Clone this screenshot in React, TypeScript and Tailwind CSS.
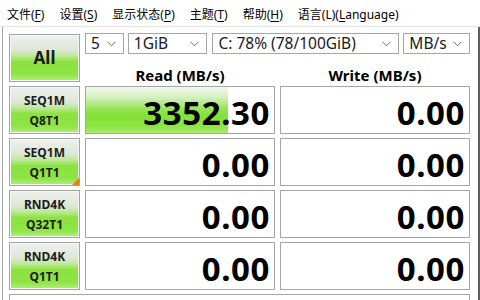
import type { ReactNode } from "react";

const FONT = `"Noto Sans", "Noto Sans CJK SC", sans-serif`;

const menus: { label: string; key: string; rest: string; pre?: string }[] = [
  { pre: "文件(", key: "F", rest: ")", label: "file" },
  { pre: "设置(", key: "S", rest: ")", label: "settings" },
  { pre: "显示状态(", key: "P", rest: ")", label: "view" },
  { pre: "主题(", key: "T", rest: ")", label: "theme" },
  { pre: "帮助(", key: "H", rest: ")", label: "help" },
  { pre: "语言(L)(", key: "L", rest: "anguage)", label: "lang" },
];

const rows = [
  { a: "SEQ1M", b: "Q8T1", read: 3352.3, write: 0, marker: false },
  { a: "SEQ1M", b: "Q1T1", read: 0, write: 0, marker: true },
  { a: "RND4K", b: "Q32T1", read: 0, write: 0, marker: false },
  { a: "RND4K", b: "Q1T1", read: 0, write: 0, marker: false },
];

const BTN =
  "relative border border-[#a3a3a3] shadow-[inset_0_0_0_1px_#f6f8f4] bg-[linear-gradient(to_bottom,#eef1ec_0%,#e1e7db_30%,#bfe99d_45%,#8ce33e_58%,#8de545_85%,#b2ee7c_100%)] flex flex-col items-center justify-center text-[#1c1c1c] font-bold";

function Chevron() {
  return (
    <svg width="9" height="6" viewBox="0 0 9 6" className="shrink-0">
      <path d="M0.5 0.8 L4.5 4.8 L8.5 0.8" fill="none" stroke="#6b6b6b" strokeWidth="1" />
    </svg>
  );
}

function Combo({ w, children }: { w: string; children: ReactNode }) {
  return (
    <div
      className={`${w} h-[21px] border border-[#a6a6a6] bg-white flex items-center justify-between pl-[5px] pr-[7px] text-[15.5px] leading-none text-[#1a1a1a]`}
    >
      <span>{children}</span>
      <Chevron />
    </div>
  );
}

function ValueCell({ value, max }: { value: number; max: number }) {
  const pct = Math.min(100, (value / max) * 100);
  return (
    <div className="relative h-[48px] border border-[#a6a6a6] bg-white overflow-hidden">
      {value > 0 && (
        <div
          className="absolute left-0 top-0 bottom-0 bg-[linear-gradient(to_bottom,#f2f8ee_0%,#d6f0c2_22%,#9ce65f_45%,#84e137_60%,#8be443_85%,#a9ec73_100%)]"
          style={{ width: `${pct}%` }}
        />
      )}
      <div className="relative h-full flex items-center justify-end pr-[4px] pt-[4px] text-[33px] tracking-[0.6px] font-bold leading-none text-black">
        {value.toFixed(2)}
      </div>
    </div>
  );
}

export default function App() {
  return (
    <div
      className="w-[480px] h-[300px] bg-white overflow-hidden flex flex-col"
      style={{ fontFamily: FONT }}
    >
      <div className="h-[27px] shrink-0 flex items-center pl-[7px] pt-[3px] gap-[15px] text-[12px] text-black border-b border-[#e3e3e3]">
        {menus.map((m) => (
          <span key={m.label} className="whitespace-nowrap">
            {m.pre}
            <span className="underline underline-offset-2">{m.key}</span>
            {m.rest}
          </span>
        ))}
      </div>

      <div className="flex-1 ml-[2px] border-l border-[#a8a8a8] border-r-2 border-r-[#5c5f5a] pl-[6px] pt-[7px] pr-[6px]">
        <div className="grid grid-cols-[71px_190px_190px] gap-x-[5px] gap-y-[4px]">
          <div className={`${BTN} h-[48px] text-[17px]`}>All</div>
          <div className="col-span-2 h-[48px] flex flex-col">
            <div className="flex gap-[4px] -mt-[1px]">
              <Combo w="w-[39px]">5</Combo>
              <Combo w="w-[80px]">1GiB</Combo>
              <Combo w="w-[188px] ml-[1px]">C: 78% (78/100GiB)</Combo>
              <Combo w="w-[67px]">MB/s</Combo>
            </div>
            <div className="flex-1 grid grid-cols-2 gap-x-[5px] items-center text-[15px] font-bold text-black">
              <div className="text-center pt-[10px]">Read (MB/s)</div>
              <div className="text-center pt-[10px]">Write (MB/s)</div>
            </div>
          </div>

          {rows.map((r, i) => (
            <div key={i} className="contents">
              <div className={`${BTN} h-[48px] text-[12px] leading-[20px] pt-[1px]`}>
                <span>{r.a}</span>
                <span>{r.b}</span>
                {r.marker && (
                  <span className="absolute right-0 bottom-0 w-0 h-0 border-l-[7px] border-l-transparent border-b-[7px] border-b-[#f07a1e]" />
                )}
              </div>
              <ValueCell value={r.read} max={4450} />
              <ValueCell value={r.write} max={4450} />
            </div>
          ))}

          <div className="col-span-3 h-[20px] border border-[#a6a6a6] bg-white" />
        </div>
      </div>
    </div>
  );
}
